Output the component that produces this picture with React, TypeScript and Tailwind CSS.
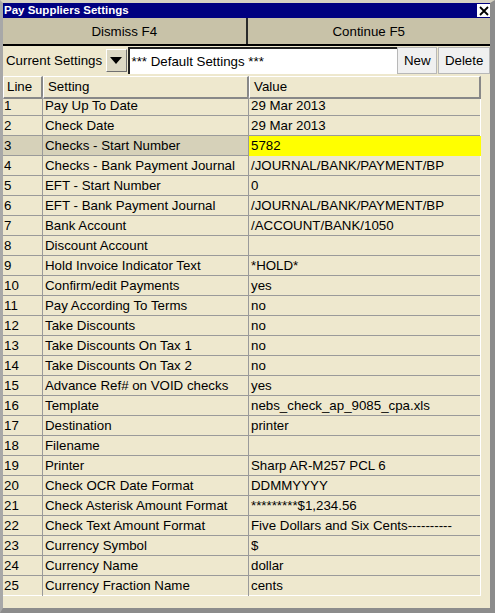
import { useState } from "react"

const rows: [string, string][] = [
  ["Pay Up To Date", "29 Mar 2013"],
  ["Check Date", "29 Mar 2013"],
  ["Checks - Start Number", "5782"],
  ["Checks - Bank Payment Journal", "/JOURNAL/BANK/PAYMENT/BP"],
  ["EFT - Start Number", "0"],
  ["EFT - Bank Payment Journal", "/JOURNAL/BANK/PAYMENT/BP"],
  ["Bank Account", "/ACCOUNT/BANK/1050"],
  ["Discount Account", ""],
  ["Hold Invoice Indicator Text", "*HOLD*"],
  ["Confirm/edit Payments", "yes"],
  ["Pay According To Terms", "no"],
  ["Take Discounts", "no"],
  ["Take Discounts On Tax 1", "no"],
  ["Take Discounts On Tax 2", "no"],
  ["Advance Ref# on VOID checks", "yes"],
  ["Template", "nebs_check_ap_9085_cpa.xls"],
  ["Destination", "printer"],
  ["Filename", ""],
  ["Printer", "Sharp AR-M257 PCL 6"],
  ["Check OCR Date Format", "DDMMYYYY"],
  ["Check Asterisk Amount Format", "*********$1,234.56"],
  ["Check Text Amount Format", "Five Dollars and Six Cents----------"],
  ["Currency Symbol", "$"],
  ["Currency Name", "dollar"],
  ["Currency Fraction Name", "cents"],
]

export default function App() {
  const [selected] = useState(2)

  return (
    <div className="w-[495px] h-[613px] bg-[#eee8ce] border-t-[3px] border-t-[#d6d2c2] border-l-[3px] border-l-[#a8a8a8] border-r-[5px] border-r-[#8c8c8c] border-b-[5px] border-b-[#8c8c8c] flex flex-col text-[13.3px] text-black [font-family:'Liberation_Sans',Arial,sans-serif] overflow-hidden">
      {/* title bar */}
      <div className="h-[15px] bg-[#000080] flex items-center justify-between pl-[1px] shrink-0">
        <span className="text-white font-bold text-[11.5px] leading-none">Pay Suppliers Settings</span>
        <button className="w-[13px] h-[13px] bg-white flex items-center justify-center">
          <svg width="10" height="10" viewBox="0 0 10 10">
            <path d="M1 1 L9 9 M9 1 L1 9" stroke="black" strokeWidth="1.8" />
          </svg>
        </button>
      </div>

      {/* action buttons */}
      <div className="h-[28px] flex border-b-[2px] border-black shrink-0">
        <button className="flex-1 bg-[#c8c2a8] border-r-[2px] border-[#2a2a2a] flex items-center justify-center pt-[1px]">
          Dismiss F4
        </button>
        <button className="flex-1 bg-[#c8c2a8] flex items-center justify-center pt-[1px]">Continue F5</button>
      </div>

      {/* settings selector */}
      <div className="h-[28px] flex items-center pt-[1px] shrink-0">
        <span className="w-[103px] pl-[3px]">Current Settings</span>
        <button className="w-[21px] h-[23px] bg-[#dcd8c4] border border-t-white border-l-white border-b-[#707070] border-r-[#707070] flex items-center justify-center">
          <svg width="12" height="7" viewBox="0 0 12 7">
            <path d="M0 0 H12 L6 7 Z" fill="black" />
          </svg>
        </button>
        <div className="w-[271px] h-[27px] ml-[1px] bg-white border-t-[2px] border-l-[2px] border-t-[#222] border-l-[#222] flex items-center pl-[2px]">
          *** Default Settings ***
        </div>
        <button className="w-[40px] h-[27px] bg-[#f0f0f0] border border-[#b8b8b8] flex items-center justify-center">New</button>
        <button className="w-[52px] h-[27px] ml-[1px] bg-[#f0f0f0] border border-[#b8b8b8] flex items-center justify-center">
          Delete
        </button>
      </div>

      {/* table */}
      <div className="w-[478px] mt-[2px]">
        <div className="grid grid-cols-[40px_206px_232px] h-[20px]">
          <div className="border-t border-l border-white border-b-2 border-r-2 border-b-[#888] border-r-[#888] flex items-center pl-[3px]">Line</div>
          <div className="border-t border-l border-white border-b-2 border-r-2 border-b-[#888] border-r-[#888] flex items-center pl-[4px]">Setting</div>
          <div className="border-t border-l border-white border-b-2 border-r-2 border-b-[#888] border-r-[#888] flex items-center pl-[4px]">Value</div>
        </div>
        <div className="border-r border-white">
          {rows.map(([setting, value], i) => {
            const sel = i === selected
            const last = i === rows.length - 1
            return (
              <div
                key={i}
                className={`grid grid-cols-[40px_206px_232px] h-[20px] border-b ${last ? "border-white" : "border-[#9a9a9a]"} ${sel ? "bg-[#d6d1b9]" : ""}`}
              >
                <div className="flex items-center pl-[1px] border-r border-[#9a9a9a]">{i + 1}</div>
                <div className="flex items-center pl-[2px] border-r border-[#9a9a9a]">{setting}</div>
                <div className={`flex items-center pl-[2px] ${sel ? "bg-[#ffff00]" : ""}`}>{value}</div>
              </div>
            )
          })}
        </div>
      </div>
    </div>
  )
}
